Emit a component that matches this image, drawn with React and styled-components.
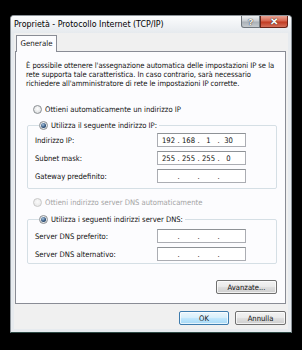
import React from "react";
import styled, { createGlobalStyle } from "styled-components";

const GlobalStyle = createGlobalStyle`
  html, body {
    margin: 0;
    padding: 0;
    background: #000;
  }
  body {
    font-family: "DejaVu Sans Condensed", "Liberation Sans", Arial, sans-serif;
    font-size: 7.6px;
    color: #111;
  }
`;

const Screen = styled.div`
  width: 302px;
  height: 350px;
  padding: 15px 0 0 10px;
  box-sizing: border-box;
`;

const Window = styled.div`
  width: 282px;
  height: 318px;
  box-sizing: border-box;
  border: 1px solid #8d949a;
  border-bottom-color: #2e4a45;
  border-radius: 4px 4px 0 0;
  background: #e7ebef;
  display: flex;
  flex-direction: column;
`;

const TitleBar = styled.div`
  height: 17px;
  display: flex;
  align-items: flex-start;
  padding-left: 3px;
  background: linear-gradient(#fbfcfd, #e6eaee);
  border-radius: 3px 3px 0 0;
`;

const Title = styled.div`
  flex: 1;
  font-size: 8.8px;
  line-height: 17px;
  color: #000;
`;

const CaptionButton = styled.div`
  height: 12px;
  width: ${({ $w }) => $w}px;
  box-sizing: border-box;
  display: flex;
  align-items: center;
  justify-content: center;
  font-family: "Liberation Sans", Arial, sans-serif;
  font-weight: bold;
  font-size: ${({ $close }) => ($close ? 10 : 9)}px;
  color: #fff;
  border: 1px solid ${({ $close }) => ($close ? "#6a2418" : "#6f767c")};
  border-top: none;
  border-radius: ${({ $close }) => ($close ? "0 0 3px 0" : "0 0 0 3px")};
  background: ${({ $close }) =>
    $close
      ? "linear-gradient(#e9a394 0%, #d8664f 45%, #c23c22 55%, #d4705a 100%)"
      : "linear-gradient(#eef0f2 0%, #c9cdd1 45%, #aab1b7 55%, #c6cbcf 100%)"};
  text-shadow: 0 0 1px #333, 0 0 1px #333;
  margin-right: ${({ $close }) => ($close ? "3px" : "0")};
`;

const Client = styled.div`
  flex: 1;
  margin: 0 3px 3px;
  padding: 2px 2px 4px 1px;
  background: #f0f0f0;
  display: flex;
  flex-direction: column;
`;

const TabStrip = styled.div`
  display: flex;
  padding-left: 1px;
`;

const Tab = styled.div`
  width: 41px;
  height: 17px;
  box-sizing: border-box;
  border: 1px solid #898c95;
  border-bottom: none;
  background: #fcfcfe;
  margin-bottom: -1px;
  position: relative;
  z-index: 1;
  text-align: center;
  line-height: 16px;
  font-size: 7.8px;
`;

const Panel = styled.div`
  height: 253px;
  box-sizing: border-box;
  border: 1px solid #898c95;
  background: #fcfcfe;
  display: flex;
  flex-direction: column;
`;

const Intro = styled.p`
  margin: 9px 4px 0 10px;
  line-height: 9px;
  white-space: nowrap;
  letter-spacing: -0.05px;
`;

const OptionRow = styled.div`
  display: flex;
  align-items: center;
  height: 12px;
  gap: 3px;
  margin-top: ${({ $mt }) => $mt || 0}px;
  padding-left: ${({ $pl }) => ($pl === undefined ? 17 : $pl)}px;
  color: ${({ $disabled }) => ($disabled ? "#a3a3a3" : "inherit")};
`;

const Radio = styled.span`
  width: 9px;
  height: 9px;
  box-sizing: border-box;
  border-radius: 50%;
  border: 1px solid ${({ $disabled }) => ($disabled ? "#c8c8c8" : "#8b8f93")};
  background: ${({ $disabled }) =>
    $disabled
      ? "radial-gradient(circle at 50% 40%, #fafafa, #e4e4e4)"
      : "radial-gradient(circle at 50% 40%, #ffffff, #d4d6d8)"};
  display: flex;
  align-items: center;
  justify-content: center;
  &::after {
    content: "";
    display: ${({ $checked }) => ($checked ? "block" : "none")};
    width: 5px;
    height: 5px;
    border-radius: 50%;
    background: radial-gradient(circle at 40% 35%, #a9c6e2, #2a4e76 60%, #1c3553);
  }
`;

const Group = styled.fieldset`
  margin: ${({ $mt }) => $mt}px 8px 0 11px;
  padding: ${({ $pt }) => $pt}px 7px ${({ $pb }) => $pb}px 7px;
  border: 1px solid #d5dfe5;
  border-radius: 2px;
  min-width: 0;
  display: flex;
  flex-direction: column;
  gap: 4px;
`;

const Legend = styled.legend`
  padding: 0 2px 0 0;
  margin-left: 4px;
`;

const FieldRow = styled.div`
  display: grid;
  grid-template-columns: 122px 89px;
  align-items: center;
  height: 14px;
`;

const IpBox = styled.div`
  height: 14px;
  box-sizing: border-box;
  border: 1px solid #abadb3;
  border-top-color: #8e9296;
  background: #fff;
  display: flex;
  align-items: center;
  padding-left: 3px;
`;

const Octet = styled.span`
  width: 15px;
  text-align: center;
`;

const Dot = styled.span`
  width: 5px;
  text-align: center;
`;

const Button = styled.div`
  width: ${({ $w }) => $w}px;
  height: 14px;
  box-sizing: border-box;
  border: 1px solid ${({ $default }) => ($default ? "#3d7bad" : "#707070")};
  border-radius: 2px;
  background: ${({ $default }) =>
    $default
      ? "linear-gradient(#eaf6fd 0%, #d9f0fc 45%, #bee6fd 55%, #a7d9f5 100%)"
      : "linear-gradient(#f2f2f2 0%, #ebebeb 45%, #dddddd 55%, #cfcfcf 100%)"};
  box-shadow: inset 0 0 0 1px rgba(255, 255, 255, 0.7);
  display: flex;
  align-items: center;
  justify-content: center;
`;

const AdvancedRow = styled.div`
  display: flex;
  justify-content: flex-end;
  margin: 16px 8px 0 0;
`;

const Footer = styled.div`
  display: flex;
  justify-content: flex-end;
  gap: 6px;
  margin-top: 7px;
`;

function IpField({ value }) {
  const parts = value ? value.split(".") : ["", "", "", ""];
  return (
    <IpBox>
      {parts.map((p, i) => (
        <React.Fragment key={i}>
          <Octet>{p}</Octet>
          {i < 3 && <Dot>.</Dot>}
        </React.Fragment>
      ))}
    </IpBox>
  );
}

function Option({ checked, disabled, children, ...rest }) {
  return (
    <OptionRow $disabled={disabled} {...rest}>
      <Radio $checked={checked} $disabled={disabled} />
      <span>{children}</span>
    </OptionRow>
  );
}

export default function App() {
  return (
    <Screen>
      <GlobalStyle />
      <Window>
        <TitleBar>
          <Title>Proprietà - Protocollo Internet (TCP/IP)</Title>
          <CaptionButton $w={19}>?</CaptionButton>
          <CaptionButton $w={28} $close>
            ✕
          </CaptionButton>
        </TitleBar>
        <Client>
          <TabStrip>
            <Tab>Generale</Tab>
          </TabStrip>
          <Panel>
            <Intro>
              È possibile ottenere l'assegnazione automatica delle impostazioni IP se la
              <br />
              rete supporta tale caratteristica. In caso contrario, sarà necessario
              <br />
              richiedere all'amministratore di rete le impostazioni IP corrette.
            </Intro>
            <Option $mt={15}>Ottieni automaticamente un indirizzo IP</Option>
            <Group $mt={4} $pt={2} $pb={5}>
              <Legend>
                <Option checked $pl={0}>
                  Utilizza il seguente indirizzo IP:
                </Option>
              </Legend>
              <FieldRow>
                <span>Indirizzo IP:</span>
                <IpField value="192.168.1.30" />
              </FieldRow>
              <FieldRow>
                <span>Subnet mask:</span>
                <IpField value="255.255.255.0" />
              </FieldRow>
              <FieldRow>
                <span>Gateway predefinito:</span>
                <IpField />
              </FieldRow>
            </Group>
            <Option $mt={7} disabled>
              Ottieni indirizzo server DNS automaticamente
            </Option>
            <Group $mt={5} $pt={4} $pb={2}>
              <Legend>
                <Option checked $pl={0}>
                  Utilizza i seguenti indirizzi server DNS:
                </Option>
              </Legend>
              <FieldRow>
                <span>Server DNS preferito:</span>
                <IpField />
              </FieldRow>
              <FieldRow>
                <span>Server DNS alternativo:</span>
                <IpField />
              </FieldRow>
            </Group>
            <AdvancedRow>
              <Button $w={61}>Avanzate...</Button>
            </AdvancedRow>
          </Panel>
          <Footer>
            <Button $w={50} $default>
              OK
            </Button>
            <Button $w={51}>Annulla</Button>
          </Footer>
        </Client>
      </Window>
    </Screen>
  );
}
